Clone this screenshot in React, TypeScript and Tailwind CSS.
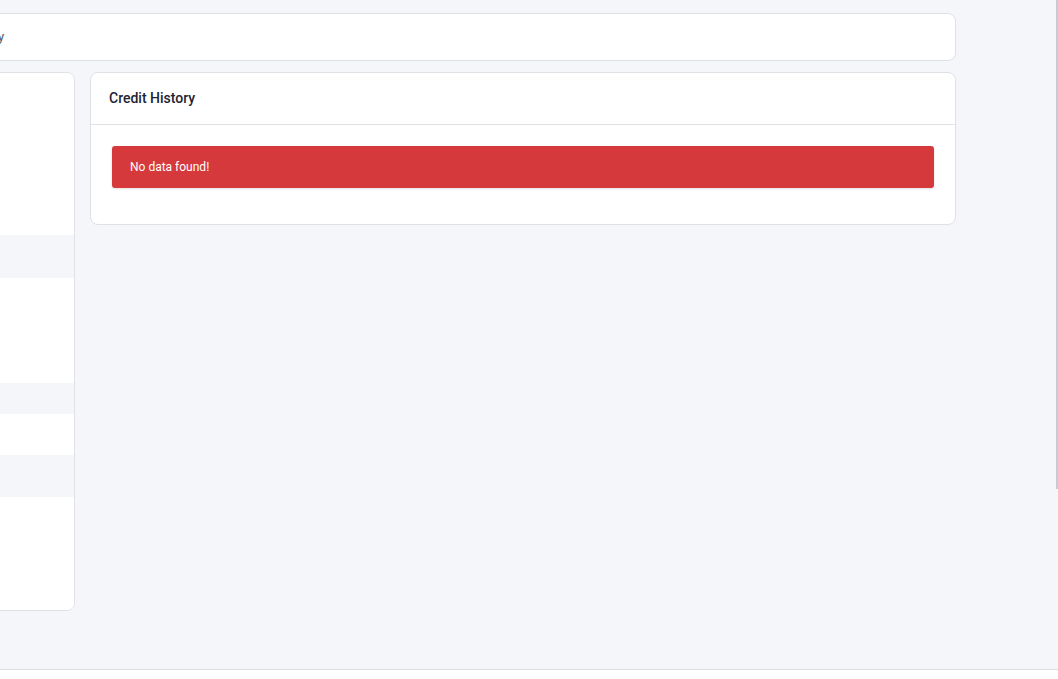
const LEFT_ROWS = [
  { h: "h-[162px]", striped: false },
  { h: "h-[43px]", striped: true },
  { h: "h-[105px]", striped: false },
  { h: "h-[31px]", striped: true },
  { h: "h-[41px]", striped: false },
  { h: "h-[42px]", striped: true },
  { h: "flex-1", striped: false },
] as const;

export default function App() {
  return (
    <div className="relative flex h-[679px] w-[1058px] flex-col overflow-hidden bg-[#f5f6fa] font-['Roboto',sans-serif]">
      <div className="flex flex-1 flex-col pt-[13px]">
        <div className="ml-[-120px] flex h-[48px] w-[1076px] items-center rounded-lg border border-[#dfe1e7] bg-white pl-[16px]">
          <span className="relative left-[-30px] text-[13px] text-[#4b5563]">Company Credit History</span>
        </div>

        <div className="mt-[11px] flex items-start gap-[15px]">
          <div className="ml-[-200px] flex h-[539px] w-[275px] flex-col overflow-hidden rounded-lg border border-[#dfe1e7] bg-white">
            {LEFT_ROWS.map((row, i) => (
              <div key={i} className={`${row.h} ${row.striped ? "bg-[#f5f6fa]" : "bg-white"}`} />
            ))}
          </div>

          <div className="w-[866px] rounded-lg border border-[#dfe1e7] bg-white">
            <div className="flex h-[52px] items-center border-b border-[#dfe1e7] px-[18px]">
              <h2 className="text-[14px] font-medium text-[#1e2433]">Credit History</h2>
            </div>
            <div className="px-[21px] pb-[36px] pt-[21px]">
              <div className="flex h-[42px] items-center rounded-[3px] bg-[#d6393b] px-[18px] shadow-sm">
                <p className="text-[12px] text-white">No data found!</p>
              </div>
            </div>
          </div>
        </div>
      </div>

      <div className="h-[10px] border-t border-[#dcdee4] bg-white" />

      <div className="absolute right-0 top-0 h-[489px] w-[2px] bg-[#c8cad4]" />
    </div>
  );
}
